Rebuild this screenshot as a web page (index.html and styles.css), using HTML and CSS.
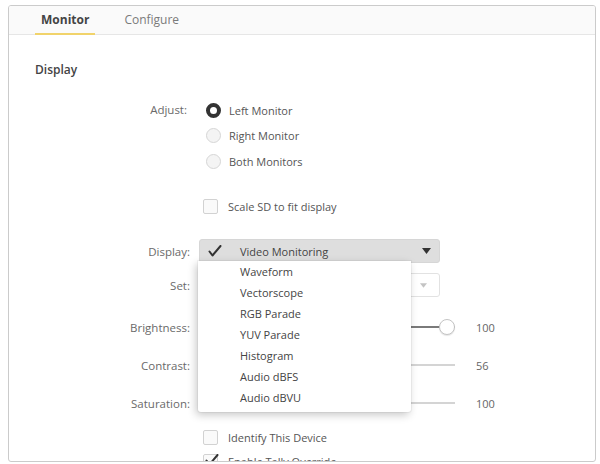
FILE: index.html
```html
<!DOCTYPE html>
<html lang="en">
<head>
<meta charset="utf-8">
<title>Monitor</title>
<link rel="stylesheet" href="styles.css">
</head>
<body>
<div class="panel">
  <nav class="tabs">
    <span class="tab active">Monitor</span>
    <span class="tab">Configure</span>
  </nav>
  <div class="content">
    <h2 class="section-title">Display</h2>

    <div class="row row-adjust">
      <span class="label">Adjust:</span>
      <div class="options">
        <label class="option"><span class="radio checked"></span>Left Monitor</label>
        <label class="option"><span class="radio"></span>Right Monitor</label>
        <label class="option"><span class="radio"></span>Both Monitors</label>
      </div>
    </div>

    <div class="row row-scale">
      <span class="label"></span>
      <label class="option"><span class="checkbox"></span>Scale SD to fit display</label>
    </div>

    <div class="row row-display">
      <span class="label">Display:</span>
      <div class="select-wrap">
        <div class="select open">
          <svg class="check" width="14" height="12" viewBox="0 0 14 12"><path d="M1.5 6.5 L4.5 10.5 L12.5 1" fill="none" stroke="#333" stroke-width="2" stroke-linecap="round" stroke-linejoin="round"/></svg>
          <span class="select-text">Video Monitoring</span>
          <svg class="arrow" width="9" height="6" viewBox="0 0 9 6"><path d="M0 0 H9 L4.5 6 Z" fill="#333"/></svg>
        </div>
        <ul class="menu">
          <li>Waveform</li>
          <li>Vectorscope</li>
          <li>RGB Parade</li>
          <li>YUV Parade</li>
          <li>Histogram</li>
          <li>Audio dBFS</li>
          <li>Audio dBVU</li>
        </ul>
      </div>
    </div>

    <div class="row row-set">
      <span class="label">Set:</span>
      <div class="select">
        <span class="select-text"></span>
        <svg class="arrow" width="7" height="5" viewBox="0 0 9 6"><path d="M0 0 H9 L4.5 6 Z" fill="#c4c4c4"/></svg>
      </div>
    </div>

    <div class="row row-brightness">
      <span class="label">Brightness:</span>
      <div class="slider-line">
        <div class="slider"><div class="fill" style="width:100%"></div><span class="thumb" style="left:100%"></span></div>
        <span class="value">100</span>
      </div>
    </div>

    <div class="row row-slider">
      <span class="label">Contrast:</span>
      <div class="slider-line">
        <div class="slider"><div class="fill" style="width:56%"></div><span class="thumb" style="left:56%"></span></div>
        <span class="value">56</span>
      </div>
    </div>

    <div class="row row-slider">
      <span class="label">Saturation:</span>
      <div class="slider-line">
        <div class="slider"><div class="fill" style="width:50%"></div><span class="thumb" style="left:50%"></span></div>
        <span class="value">100</span>
      </div>
    </div>

    <div class="row row-check row-identify">
      <span class="label"></span>
      <label class="option"><span class="checkbox"></span>Identify This Device</label>
    </div>

    <div class="row row-check">
      <span class="label"></span>
      <label class="option"><span class="checkbox checked"><svg width="14" height="12" viewBox="0 0 14 12"><path d="M1.5 6.5 L4.5 10.5 L12.5 1" fill="none" stroke="#333" stroke-width="2" stroke-linecap="round" stroke-linejoin="round"/></svg></span>Enable Tally Override</label>
    </div>
  </div>
</div>
</body>
</html>
```

FILE: styles.css
```css
* { box-sizing: border-box; }

html, body {
  margin: 0;
  padding: 0;
  background: #ffffff;
}

body {
  font-family: "Open Sans", "Noto Sans", sans-serif;
  font-size: 11px;
  color: #5a5a5a;
}

.panel {
  margin: 5px 4px 0 8px;
  height: 457px;
  border: 1px solid #cbcbcb;
  border-radius: 3px;
  overflow: hidden;
  background: #fff;
}

/* tab bar */
.tabs {
  display: flex;
  gap: 23px;
  height: 29px;
  padding-left: 26px;
  background: #fafafa;
  border-bottom: 1px solid #e6e6e6;
}

.tab {
  display: flex;
  align-items: center;
  padding: 0 6px;
  color: #7a7a7a;
  font-size: 12px;
  border-bottom: 2px solid transparent;
  margin-bottom: -1px;
}

.tab.active {
  font-weight: 700;
  color: #444;
  border-bottom-color: #f1d36b;
}

/* body */
.content {
  position: relative;
}

.section-title {
  margin: 23px 0 0 26px;
  height: 24px;
  line-height: 24px;
  font-size: 12px;
  font-weight: 600;
  color: #444;
}

.row {
  display: grid;
  grid-template-columns: 181px 1fr;
  column-gap: 9px;
  align-items: center;
  min-height: 24px;
}

.label {
  text-align: right;
  color: #6a6a6a;
  font-size: 11.5px;
}

.row-adjust { margin-top: 16px; align-items: start; }
.row-adjust .label { line-height: 24px; padding-right: 3px; }
.row-scale { margin-top: 21px; }
.row-display { margin-top: 21px; }
.row-set { margin-top: 10px; }
.row-brightness { margin-top: 18px; }
.row-slider { margin-top: 14px; }
.row-identify { margin-top: 10px; }
.row-check { min-height: 22px; }

.options {
  display: flex;
  flex-direction: column;
  gap: 1.5px;
}

.option {
  display: flex;
  align-items: center;
  height: 24px;
  padding-left: 7px;
  color: #555;
}

.radio {
  width: 15px;
  height: 15px;
  border-radius: 50%;
  border: 1px solid #d6d6d6;
  background: #f4f4f4;
  margin-right: 8px;
}

.radio.checked {
  border: 4px solid #333;
  background: #fff;
}

.checkbox {
  display: flex;
  align-items: center;
  justify-content: center;
  width: 15px;
  height: 15px;
  border: 1px solid #d2d2d2;
  border-radius: 2px;
  background: #fafafa;
  margin-right: 10px;
  margin-left: -3px;
}

.checkbox.checked svg {
  margin-top: -2px;
  margin-left: 2px;
  flex: none;
}

/* selects */
.select-wrap {
  position: relative;
  width: 241px;
}

.select {
  display: flex;
  align-items: center;
  width: 241px;
  height: 24px;
  border: 1px solid #e2e2e2;
  border-radius: 3px;
  background: #fff;
  padding: 0 8px 0 8px;
}

.select.open {
  background: #dedede;
  border-color: #d6d6d6;
}

.select .check {
  flex: none;
  margin-right: 18px;
}

.select-text {
  flex: 1;
  color: #444;
}

.select .arrow {
  flex: none;
}

.row-set .select .arrow { margin-right: 4px; }

.menu {
  position: absolute;
  left: -1px;
  top: 22px;
  z-index: 5;
  width: 213px;
  margin: 0;
  padding: 0 0 4px;
  list-style: none;
  background: #fff;
  border-radius: 0 0 3px 3px;
  box-shadow: -2px 3px 9px rgba(0, 0, 0, 0.22), 0 0 0 1px rgba(0, 0, 0, 0.04);
}

.menu li {
  height: 21px;
  line-height: 21px;
  padding-left: 42px;
  color: #444;
}

/* sliders */
.slider-line {
  display: flex;
  align-items: center;
  gap: 21px;
}

.slider {
  position: relative;
  width: 256px;
  height: 2px;
  background: #d4d4d4;
}

.fill {
  height: 100%;
  background: #7a7a7a;
}

.thumb {
  position: absolute;
  top: 50%;
  width: 16px;
  height: 16px;
  margin: -8px 0 0 -16px;
  border-radius: 50%;
  border: 1px solid #c4c4c4;
  background: #fff;
  box-shadow: 0 1px 1px rgba(0, 0, 0, 0.1);
}

.value {
  color: #666;
}
```
